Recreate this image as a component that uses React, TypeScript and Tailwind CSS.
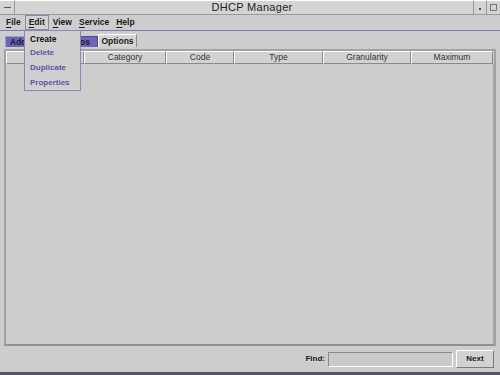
import React from 'react';

const menus = ['File', 'Edit', 'View', 'Service', 'Help'];
const columns = [
  { name: '', w: 'w-[78px]' },
  { name: 'Category', w: 'w-[82px]' },
  { name: 'Code', w: 'w-[68px]' },
  { name: 'Type', w: 'w-[89px]' },
  { name: 'Granularity', w: 'w-[88px]' },
  { name: 'Maximum', w: 'w-[82px]' },
];

const Mnemonic = ({ label }: { label: string }) => (
  <span>
    <span className="underline decoration-1 underline-offset-[2px]">{label[0]}</span>
    {label.slice(1)}
  </span>
);

export default function App() {
  return (
    <div
      className="relative w-[500px] h-[375px] bg-[#cdcdcd] flex flex-col overflow-hidden text-[#1a1a1a]"
      style={{ fontFamily: '"Liberation Sans", Arial, sans-serif' }}
    >
      {/* title bar */}
      <div className="h-[15px] flex border-b border-[#9a9a9a] bg-[#d4d4d4]">
        <div className="w-[15px] border-r border-[#9a9a9a] border-t border-t-white flex items-center justify-center">
          <div className="w-[7px] h-px bg-[#555]" />
        </div>
        <div className="flex-1 flex items-center justify-center text-[11px] tracking-[0.3px] text-[#222] border-t border-white pl-[16px]">
          DHCP Manager
        </div>
        <div className="w-[13px] border-l border-[#9a9a9a] border-t border-t-white flex items-center justify-center">
          <div className="w-[2px] h-[2px] bg-[#555] mt-[2px]" />
        </div>
        <div className="w-[14px] border-l border-[#9a9a9a] border-t border-t-white flex items-center justify-center">
          <div className="w-[7px] h-[7px] border border-[#777]" />
        </div>
      </div>

      {/* menu bar */}
      <div className="h-[15px] flex items-center pl-[6px] gap-[7px] text-[8.5px] font-bold">
        {menus.map((m) => (
          <div
            key={m}
            className={
              m === 'Edit'
                ? 'h-[15px] -mx-[3px] px-[3px] flex items-center border border-[#8a8aa8] bg-[#d2d2d2]'
                : 'flex items-center'
            }
          >
            <Mnemonic label={m} />
          </div>
        ))}
      </div>
      <div className="h-px bg-[#7e7cb0]" />

      {/* tabs */}
      <div className="h-[14px] mt-[2px] flex items-end pl-[5px] text-[8.5px] font-bold">
        <div className="h-[11px] w-[52px] bg-[#6a66b8] border-t border-l border-[#9c9ad0] pl-[4px] flex items-center overflow-hidden whitespace-nowrap">
          Addresses
        </div>
        <div className="h-[11px] w-[41px] bg-[#6a66b8] border-t border-r border-[#4c4890] flex items-center justify-end pr-[7px] overflow-hidden whitespace-nowrap">
          Macros
        </div>
        <div className="h-[13px] w-[39px] border-t border-l border-r border-t-white border-l-white border-r-[#8a8a8a] bg-[#d4d4d4] flex items-center justify-center">
          Options
        </div>
      </div>

      {/* table area */}
      <div className="flex-1 mx-[4px] mt-[2px] border-2 border-[#a2a2a2] border-b-[#909090] flex flex-col">
        <div className="h-[13px] flex text-[8.5px] text-[#333]">
          {columns.map((c, i) => (
            <div
              key={i}
              className={`${c.w} shrink-0 border border-t-white border-l-white border-r-[#8a8a8a] border-b-[#8a8a8a] bg-[#d2d2d2] flex items-center justify-center`}
            >
              {c.name}
            </div>
          ))}
        </div>
        <div className="flex-1 border-r border-[#a8a8a8]" />
      </div>

      {/* bottom bar */}
      <div className="h-[26px] flex items-center justify-end pr-[6px] text-[8px] font-bold">
        <span className="mr-[3px]">Find:</span>
        <div className="w-[125px] h-[15px] border border-[#8a8a8a] border-b-white border-r-white bg-[#cacaca] mr-[3px]" />
        <div className="w-[38px] h-[18px] border border-t-white border-l-white border-r-[#7a7a7a] border-b-[#7a7a7a] bg-[#d2d2d2] flex items-center justify-center">
          Next
        </div>
      </div>
      <div className="h-[3px] bg-[#555566]" />

      {/* Edit dropdown */}
      <div className="absolute left-[24px] top-[30px] w-[57px] h-[61px] bg-[#cfcfcf] border border-[#8a88b0] flex flex-col pl-[5px] pt-[1px] text-[8px] font-bold">
        <div className="h-[14px] flex items-center text-[#111] text-[8.5px]">Create</div>
        <div className="h-[14px] flex items-center text-[#5a56a8]">Delete</div>
        <div className="h-[15px] flex items-center text-[#5a56a8]">Duplicate</div>
        <div className="h-[15px] flex items-center text-[#5a56a8]">Properties</div>
      </div>
    </div>
  );
}
